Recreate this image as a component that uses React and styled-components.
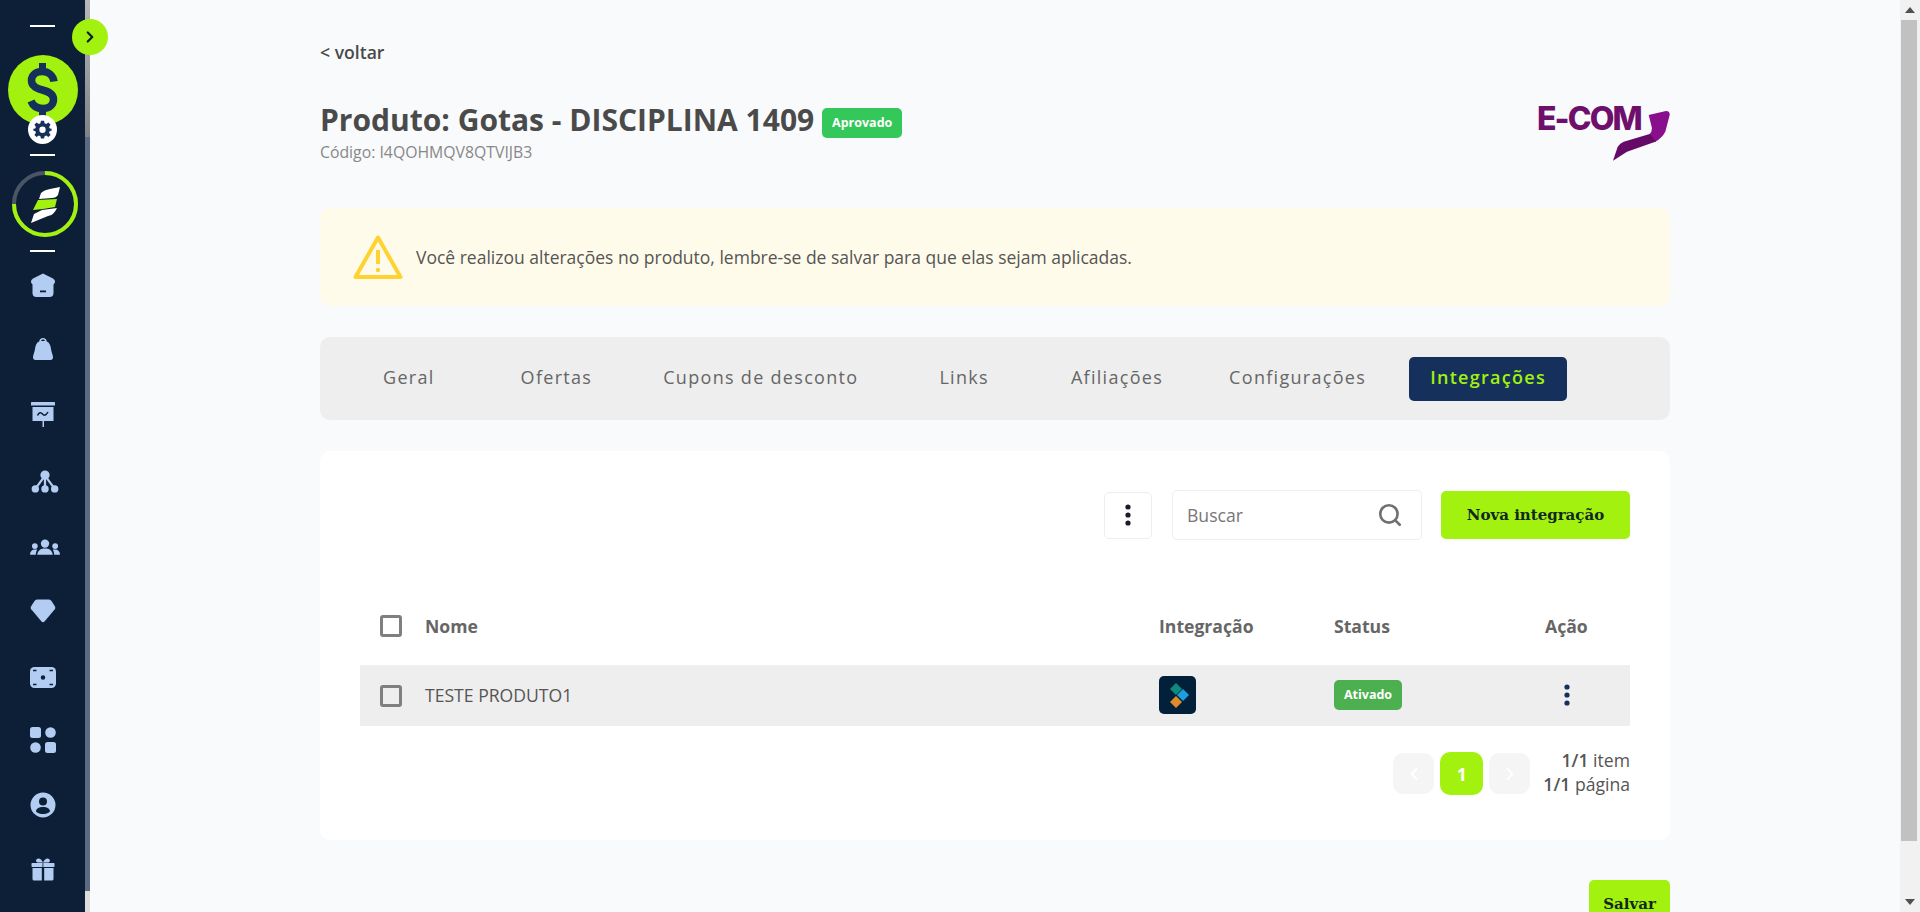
import React from "react";
import styled, { createGlobalStyle } from "styled-components";
import { ChevronLeft, ChevronRight, Search } from "lucide-react";

const LIME = "#a2f10f";
const NAVY = "#0d1f36";
const ICON = "#b3ccf1";
const SLAB = '"DejaVu Serif", "Liberation Serif", serif';

const Global = createGlobalStyle`
  html, body { margin: 0; height: 100%; overflow: hidden; }
  body { font-family: "Open Sans", "Liberation Sans", sans-serif; color: #555; }
  * { box-sizing: border-box; }
`;

const Shell = styled.div`display: flex; height: 100vh; position: relative;`;

const Sidebar = styled.aside`flex: none; width: 90px; display: flex; position: relative; z-index: 2;`;
const SideInner = styled.div`
  width: 85px; background: ${NAVY}; display: flex; flex-direction: column; align-items: center; padding-top: 25px;
`;
const Rail = styled.div`width: 5px; display: flex; flex-direction: column;`;
const RailThumb = styled.div`height: 137px; background: linear-gradient(#b5b7bb, #7f8287);`;
const RailTrack = styled.div`flex: 1; background: #5c6a84;`;
const RailEnd = styled.div`height: 21px; background: #dcdcdc;`;

const Toggle = styled.button`
  position: absolute; left: 72px; top: 19px; width: 36px; height: 36px; border-radius: 50%;
  border: 0; padding: 0; background: ${LIME}; color: ${NAVY}; display: flex; align-items: center; justify-content: center;
`;
const Rule = styled.div`width: 25px; height: 2px; background: #fff; flex: none;`;
const Avatar = styled.div`position: relative; width: 70px; height: 70px; margin-top: 28px; margin-bottom: 29px; flex: none;`;
const Gear = styled.div`
  position: absolute; left: 20px; top: 60px; width: 29px; height: 29px; border-radius: 50%; background: #fff;
  display: flex; align-items: center; justify-content: center;
`;
const Ring = styled.svg`display: block; width: 66px; height: 66px; margin: 15px 0 13px 5px; flex: none;`;
const NavList = styled.nav`display: flex; flex-direction: column; margin-top: 0.5px;`;
const NavItem = styled.div`
  height: 65px; display: flex; align-items: center; justify-content: center; color: ${ICON};
  padding-top: ${p => Math.max(p.$dy, 0) * 2}px; padding-bottom: ${p => Math.max(-p.$dy, 0) * 2}px; padding-left: ${p => p.$dx}px;
`;

const Main = styled.main`flex: 1; min-width: 0; background: #f8fafc; overflow: hidden; padding: 40px 230px;`;
const PageBar = styled.div`flex: none; width: 20px; background: #f1f1f1; display: flex; flex-direction: column;`;
const BarButton = styled.div`flex: none; height: 20px; display: flex; align-items: center; justify-content: center; color: #505050;`;
const BarThumb = styled.div`flex: none; height: 821px; margin: 0 3px 0 1px; background: #c1c1c1;`;
const BarTrack = styled.div`flex: 1;`;

const Back = styled.a`display: block; font-size: 17.6px; line-height: 24px; font-weight: 600; color: #4a4a4a;`;
const Header = styled.header`display: flex; justify-content: space-between; align-items: flex-start; margin-top: 36px; height: 62px;`;
const TitleRow = styled.div`display: flex; align-items: center; gap: 8px; height: 40px;`;
const Title = styled.h1`margin: 0; font-size: 30px; line-height: 40px; font-weight: 700; color: #4a4a4a;`;
const StatusBadge = styled.span`
  display: inline-flex; align-items: center; justify-content: center; width: ${p => p.$w}px; height: 30px; margin-top: ${p => p.$mt || 0}px;
  background: ${p => p.$bg}; color: #fff; border-radius: 5px; font-size: 12.5px; font-weight: 700;
`;
const Code = styled.div`margin-top: 3px; font-size: 15.8px; line-height: 19px; color: #888;`;
const Logo = styled.div`position: relative; width: 133px; height: 59px; margin-top: 3px;`;
const LogoText = styled.div`
  font-family: "Inter", "Open Sans", sans-serif; font-weight: 800; font-size: 32px; line-height: 31px; color: #6d0f6b; letter-spacing: -1.9px;
`;
const Swoosh = styled.svg`position: absolute; left: 76px; top: 8px; width: 57px; height: 51px;`;

const Alert = styled.div`
  margin-top: 46px; height: 98px; background: #fffbea; border-radius: 10px; display: flex; align-items: center; gap: 13px; padding-left: 33px;
  font-size: 17.5px; color: #555;
`;
const Tabs = styled.div`margin-top: 31px; height: 83px; background: #eeeeee; border-radius: 10px; display: flex; align-items: center; padding-left: 42px;`;
const Tab = styled.div`
  flex: none; margin-left: ${p => p.$ml}px; height: 44px; padding: 0 21px 3px; display: flex; align-items: center; border-radius: 5px;
  font-size: 18px; letter-spacing: 1.3px; white-space: nowrap; color: ${p => (p.$active ? LIME : "#666")}; font-weight: ${p => (p.$active ? 600 : 400)};
  background: ${p => (p.$active ? "#15305a" : "transparent")};
`;

const Card = styled.section`margin-top: 31px; height: 389px; background: #fff; border-radius: 10px; padding: 39px 40px 0;`;
const Toolbar = styled.div`display: flex; justify-content: flex-end; align-items: center; height: 50px;`;
const MenuButton = styled.button`
  width: 48px; height: 47px; padding: 0; background: #fff; border: 1px solid #eee; border-radius: 5px; display: flex; align-items: center; justify-content: center; margin-right: 20px;
`;
const SearchBox = styled.label`
  width: 250px; height: 50px; background: #fff; border: 1px solid #eee; border-radius: 5px; display: flex; align-items: center; padding: 0 18px 0 12px; margin-right: 19px; color: #707070;
`;
const SearchInput = styled.input`
  flex: 1; min-width: 0; border: 0; outline: 0; background: transparent; font: 400 17.6px "Open Sans", sans-serif; color: #777;
  &::placeholder { color: #777; opacity: 1; }
`;
const CTA = styled.button`
  border: 0; background: ${LIME}; border-radius: 5px; color: #12281f; font-family: ${SLAB}; font-weight: 700; font-size: 15px;
  width: ${p => p.$w}px; height: ${p => p.$h}px; padding: 0;
`;
const GridRow = styled.div`
  display: grid; grid-template-columns: 45px 734px 175px 211px 43px; align-items: center; padding: 0 0 ${p => p.$pb || 0}px 20px;
  height: ${p => p.$h}px; background: ${p => p.$bg || "transparent"}; margin-top: ${p => p.$mt || 0}px;
`;
const HeadCell = styled.div`font-size: 17.6px; font-weight: 700; color: #666; white-space: nowrap;`;
const Cell = styled.div`font-size: 17.6px; color: #555; white-space: nowrap;`;
const Check = styled.span`display: block; width: 22px; height: 22px; border: 3px solid #7f7f7f; border-radius: 3px; margin-top: ${p => p.$mt || 0}px;`;
const IntegrationLogo = styled.svg`display: block; width: 37px; height: 38px;`;
const Kebab = styled.svg`display: block; width: 6px; height: 22px; margin: 0 auto; color: ${p => p.$c};`;

const Pager = styled.div`display: flex; justify-content: flex-end; align-items: center; margin-top: 27px; height: 41px;`;
const PageBtn = styled.div`
  width: ${p => (p.$on ? 43 : 41)}px; height: ${p => (p.$on ? 43 : 41)}px; border-radius: 10px; display: flex; align-items: center; justify-content: center;
  background: ${p => (p.$on ? LIME : "#f5f5f5")}; color: #fff; font-weight: 700; font-size: 17.6px; margin-right: ${p => p.$mr}px;
`;
const PagerInfo = styled.div`text-align: right; font-size: 17.6px; line-height: 24px; color: #555; margin-top: -4px;`;
const Strong = styled.span`font-weight: 600;`;
const Footer = styled.div`display: flex; justify-content: flex-end; margin-top: 40px; padding-bottom: 40px;`;

const Ico = ({ children, w = 26, h = 26, vb = "0 0 26 26" }) => (
  <svg width={w} height={h} viewBox={vb} fill="currentColor">{children}</svg>
);

const navIcons = [
  { dy: 0, icon: <Ico><path d="M13 1.5 L23 6.5 Q25.5 8 25 10.5 L23.5 12.5 L23.5 21 Q23.5 25 19.5 25 L6.5 25 Q2.5 25 2.5 21 L2.5 12.5 L1 10.5 Q.5 8 3 6.5 Z" /><rect x="10" y="18.5" width="6" height="1.8" fill={NAVY} /></Ico> },
  { dy: -1, icon: <Ico w={20} h={22} vb="0 0 20 22"><path fillRule="evenodd" d="M10 0 C7.8 0 6.5 1.5 6.2 3.5 C3.5 4.5 2.6 7 2 11 C1.6 14 0 17 0 19.5 C0 21 1 22 2.5 22 H17.5 C19 22 20 21 20 19.5 C20 17 18.4 14 18 11 C17.4 7 16.5 4.5 13.8 3.5 C13.5 1.5 12.2 0 10 0 Z M10 1.5 C11 1.5 11.8 2.2 12 3 H8 C8.2 2.2 9 1.5 10 1.5 Z" /></Ico> },
  { dy: -1, icon: <Ico w={24} h={25} vb="0 0 24 25"><rect x="0" y="0" width="24" height="3.5" rx=".5" /><path d="M1.5 5 H22.5 V19 H13 V25 H11.5 V19 H1.5 Z" /><path d="M6.5 13.5 C8 10 10 10 11.5 12 C13 14 15 13.5 17 10" fill="none" stroke={NAVY} strokeWidth="1.5" /></Ico> },
  { dy: 2, dx: 5, icon: <Ico w={28} h={24} vb="0 0 30 26"><circle cx="15" cy="5.5" r="5" /><circle cx="4.5" cy="20.5" r="4" /><circle cx="15" cy="20.5" r="4" /><circle cx="25.5" cy="20.5" r="4" /><path d="M15 6 L4.5 20.5 M15 6 V20.5 M15 6 L25.5 20.5" stroke="currentColor" strokeWidth="2.4" fill="none" /></Ico> },
  { dy: 2, dx: 5, icon: <Ico w={30} h={16} vb="0 0 31 16"><circle cx="15.5" cy="4.5" r="4.3" /><path d="M7.5 16 C8 11.5 11 9.5 15.5 9.5 C20 9.5 23 11.5 23.5 16 Z" /><circle cx="5" cy="7" r="3" /><path d="M0 16 C0 12.5 2 10.5 5 10.5 L7.5 10.5 C6.5 12 6 14 6 16 Z" /><circle cx="26" cy="7" r="3" /><path d="M31 16 C31 12.5 29 10.5 26 10.5 L23.5 10.5 C24.5 12 25 14 25 16 Z" /></Ico> },
  { dy: 1, icon: <Ico h={24} vb="0 0 26 24"><path d="M7 0.5 H19 Q20.5 .5 21.5 2 L25 7.5 Q25.8 9 24.8 10.3 L14.5 22.5 Q13 24 11.5 22.5 L1.2 10.3 Q.2 9 1 7.5 L4.5 2 Q5.5 .5 7 .5 Z" /></Ico> },
  { dy: 2, icon: <Ico h={21} vb="0 0 26 21"><rect x="0" y="0" width="26" height="21" rx="4.5" /><circle cx="13" cy="10.5" r="2.2" fill={NAVY} /><path d="M3 3.5 H6.5 M19.5 3.5 H23 M3 17.5 H6.5 M19.5 17.5 H23" stroke={NAVY} strokeWidth="1.3" /></Ico> },
  { dy: 0, icon: <Ico><rect x="0" y="0" width="11" height="11" rx="2.5" /><circle cx="20.5" cy="5.5" r="5.3" /><circle cx="5.5" cy="20.5" r="5.3" /><rect x="15" y="15" width="11" height="11" rx="2.5" /></Ico> },
  { dy: 0, icon: <Ico><path fillRule="evenodd" d="M13 0.5 A12.5 12.5 0 1 1 13 25.5 A12.5 12.5 0 1 1 13 .5 Z M13 5.5 A4 4 0 1 0 13 13.5 A4 4 0 1 0 13 5.5 Z M13 15 C8.5 15 6 17 6 19.5 C8 21.5 10.5 22 13 22 C15.5 22 18 21.5 20 19.5 C20 17 17.5 15 13 15 Z" /></Ico> },
  { dy: -1, icon: <Ico w={24} h={23} vb="0 0 24 23"><path d="M6.5 4.5 C4 3.5 5 .5 7.5 .5 C9.5 .5 11 2.5 12 4.5 C13 2.5 14.5 .5 16.5 .5 C19 .5 20 3.5 17.5 4.5 Z" /><rect x="0.5" y="5" width="23" height="4" rx=".7" /><path d="M1.5 10 H10.8 V22.5 H3 Q1.5 22.5 1.5 21 Z M13.2 10 H22.5 V21 Q22.5 22.5 21 22.5 H13.2 Z" /><path d="M11.9 5 V22.5" stroke={NAVY} strokeWidth=".8" /></Ico> },
];

const KebabIcon = ({ c }) => (
  <Kebab $c={c} viewBox="0 0 6 22" fill="currentColor">
    <circle cx="3" cy="3" r="2.6" /><circle cx="3" cy="11" r="2.6" /><circle cx="3" cy="19" r="2.6" />
  </Kebab>
);

const tabs = [
  ["Geral", 0], ["Ofertas", 44], ["Cupons de desconto", 29], ["Links", 39],
  ["Afiliações", 40], ["Configurações", 24], ["Integrações", 22, true],
];

export default function App() {
  return (
    <Shell>
      <Global />
      <Sidebar>
        <SideInner>
          <Rule />
          <Avatar>
            <svg width="70" height="70" viewBox="0 0 70 70">
              <circle cx="35" cy="35" r="35" fill={LIME} />
              <path d="M46 26.5 C45 20 40 16.5 34.5 16.5 C28 16.5 23.5 20 23.5 25.5 C23.5 31.5 28.5 33.5 34.5 35 C40.5 36.5 45.5 38.5 45.5 44.5 C45.5 50 41 53.5 34.5 53.5 C29 53.5 25 51 23 46" fill="none" stroke="#15305a" strokeWidth="7.5" />
              <path d="M34.5 8 V16 M34.5 54 V64" stroke="#15305a" strokeWidth="7" />
            </svg>
            <Gear>
              <svg width="19" height="19" viewBox="0 0 24 24" fill="#15305a">
                <path fillRule="evenodd" d="M10 1 H14 L14.6 4.2 L16.7 5.1 L19.4 3.2 L22.2 6 L20.3 8.7 L21.2 10.8 L23.5 11 V13.5 L21.2 14 L20.3 16.1 L22.2 18.8 L19.4 21.6 L16.7 19.7 L14.6 20.6 L14 23.5 H10 L9.4 20.6 L7.3 19.7 L4.6 21.6 L1.8 18.8 L3.7 16.1 L2.8 14 L.5 13.5 V11 L2.8 10.8 L3.7 8.7 L1.8 6 L4.6 3.2 L7.3 5.1 L9.4 4.2 Z M12 8.3 A4 4 0 1 0 12 16.3 A4 4 0 1 0 12 8.3 Z" />
              </svg>
            </Gear>
          </Avatar>
          <Rule />
          <Ring viewBox="0 0 66 66">
            <circle cx="33" cy="33" r="31" fill="none" stroke="#4c5566" strokeWidth="4" />
            <path d="M33 2 A31 31 0 1 1 2 33" fill="none" stroke={LIME} strokeWidth="4" />
            <path d="M48 16 L46 24 Q44 27 40 27 L27 28 L29 22 Q32 19 38 18 Z" fill="#fff" />
            <path d="M21 39 L26 29 L45 28 L43 36 L31 38 Z" fill={LIME} />
            <path d="M19 52 L22 43 L30 39 L45 37 Q42 44 36 45 Z" fill="#fff" />
          </Ring>
          <Rule />
          <NavList>
            {navIcons.map(({ icon, dy, dx = 0 }, i) => <NavItem key={i} $dy={dy} $dx={dx}>{icon}</NavItem>)}
          </NavList>
        </SideInner>
        <Rail><RailThumb /><RailTrack /><RailEnd /></Rail>
        <Toggle aria-label="Expandir"><ChevronRight size={18} strokeWidth={3} /></Toggle>
      </Sidebar>
      <Main>
        <Back>&lt; voltar</Back>
        <Header>
          <div>
            <TitleRow>
              <Title>Produto: Gotas - DISCIPLINA 1409</Title>
              <StatusBadge $w={80} $bg="#34c759" $mt={5}>Aprovado</StatusBadge>
            </TitleRow>
            <Code>Código: I4QOHMQV8QTVIJB3</Code>
          </div>
          <Logo>
            <LogoText>E-COM</LogoText>
            <Swoosh viewBox="0 0 57 51">
              <path d="M35.7 4 L53 0 Q57 0 56.7 4 L52.3 20.7 Q49 27 42.3 30.7 L36 24 Q39 21 39 17.3 Z" fill="#8a0f8c" />
              <path d="M43 30.4 L14 40.7 L0 49.7 L4.7 35.7 Q7 32 10.7 30.7 L35 23.5 L37 23 Z" fill="#650a67" />
            </Swoosh>
          </Logo>
        </Header>
        <Alert>
          <svg width="50" height="46" viewBox="0 0 50 46" fill="none">
            <path d="M25 3.5 L47.5 43 H2.5 Z" stroke="#fdd231" strokeWidth="4" strokeLinejoin="round" />
            <path d="M25 16 V30" stroke="#fdd231" strokeWidth="4" />
            <circle cx="25" cy="36" r="2.2" fill="#fdd231" />
          </svg>
          Você realizou alterações no produto, lembre-se de salvar para que elas sejam aplicadas.
        </Alert>
        <Tabs>
          {tabs.map(([label, ml, on]) => <Tab key={label} $ml={ml} $active={on}>{label}</Tab>)}
        </Tabs>
        <Card>
          <Toolbar>
            <MenuButton aria-label="Mais opções"><KebabIcon c="#1a1a2a" /></MenuButton>
            <SearchBox>
              <SearchInput placeholder="Buscar" />
              <Search size={26} strokeWidth={2.4} />
            </SearchBox>
            <CTA $w={189} $h={48}>Nova integração</CTA>
          </Toolbar>
          <GridRow $h={78} $mt={47}>
            <Check />
            <HeadCell>Nome</HeadCell>
            <HeadCell>Integração</HeadCell>
            <HeadCell>Status</HeadCell>
            <HeadCell>Ação</HeadCell>
          </GridRow>
          <GridRow $h={61} $bg="#eeeeee" $pb={2}>
            <Check $mt={2} />
            <Cell>TESTE PRODUTO1</Cell>
            <IntegrationLogo viewBox="0 0 37 38">
              <rect width="37" height="38" rx="5" fill="#03203b" />
              <path d="M17 7 L23 13 L17 19 L11 13 Z" fill="#0d8c7d" />
              <path d="M24 13 L30 19 L24 25 L18 19 Z" fill="#1c9fe0" />
              <path d="M17 20 L23 26 L17 32 L11 26 Z" fill="#e08b2b" />
            </IntegrationLogo>
            <StatusBadge $w={68} $bg="#4caf50">Ativado</StatusBadge>
            <KebabIcon c="#15305a" />
          </GridRow>
          <Pager>
            <PageBtn $mr={6}><ChevronLeft size={20} strokeWidth={2.5} /></PageBtn>
            <PageBtn $on $mr={6}>1</PageBtn>
            <PageBtn $mr={13}><ChevronRight size={20} strokeWidth={2.5} /></PageBtn>
            <PagerInfo>
              <div><Strong>1/1</Strong> item</div>
              <div><Strong>1/1</Strong> página</div>
            </PagerInfo>
          </Pager>
        </Card>
        <Footer><CTA $w={81} $h={48}>Salvar</CTA></Footer>
      </Main>
      <PageBar>
        <BarButton><svg width="10" height="6" viewBox="0 0 10 6" fill="currentColor"><path d="M5 0 L10 6 H0 Z" /></svg></BarButton>
        <BarThumb />
        <BarTrack />
        <BarButton><svg width="10" height="6" viewBox="0 0 10 6" fill="currentColor"><path d="M0 0 H10 L5 6 Z" /></svg></BarButton>
      </PageBar>
    </Shell>
  );
}
